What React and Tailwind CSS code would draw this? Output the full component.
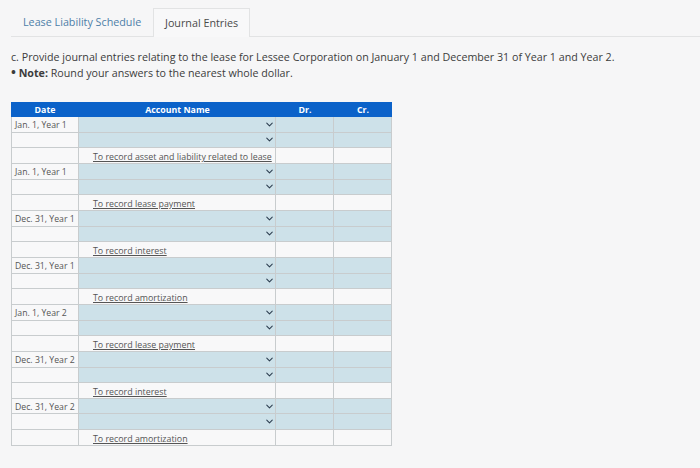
import React from 'react';
import { ChevronDown } from 'lucide-react';

const entries = [
    { date: "Jan. 1, Year 1", memo: "To record asset and liability related to lease" },
    { date: "Jan. 1, Year 1", memo: "To record lease payment" },
    { date: "Dec. 31, Year 1", memo: "To record interest" },
    { date: "Dec. 31, Year 1", memo: "To record amortization" },
    { date: "Jan. 1, Year 2", memo: "To record lease payment" },
    { date: "Dec. 31, Year 2", memo: "To record interest" },
    { date: "Dec. 31, Year 2", memo: "To record amortization" },
];

const rowClass = "grid grid-cols-[68px_197px_58px_58px] grid-rows-[15.67px] h-[15.67px]";
const cellClass = "border-r border-b border-[#c8ccce] min-w-0";

const InputRow = ({ date }) => (
    <div className={rowClass}>
        <div className={`${cellClass} border-l bg-[#f8f8f9] pl-[3px] text-[8.7px] leading-[17px] text-[#555] whitespace-nowrap`}>{date}</div>
        <div className={`${cellClass} bg-[#cde1e9] flex items-center justify-end`}>
            <ChevronDown className="w-[11px] h-[11px] text-[#2c3e50]" strokeWidth={2.3} />
        </div>
        <div className={`${cellClass} bg-[#cde1e9]`}></div>
        <div className={`${cellClass} bg-[#cde1e9]`}></div>
    </div>
);

const MemoRow = ({ memo }) => (
    <div className={rowClass}>
        <div className={`${cellClass} border-l bg-[#f8f8f9]`}></div>
        <div className={`${cellClass} bg-[#f8f8f9] pl-[14px] text-[8.85px] leading-[19px] text-[#555] underline whitespace-nowrap`}>{memo}</div>
        <div className={`${cellClass} bg-[#f8f8f9]`}></div>
        <div className={`${cellClass} bg-[#f8f8f9]`}></div>
    </div>
);

const App = () => {
    return (
        <div className="w-[700px] h-[468px] overflow-hidden bg-[#f6f6f7] font-['Open_Sans',sans-serif]">
            <div className="ml-[11px] pt-[8px] flex h-[37px] border-b border-[#e2e3e4]">
                <div className="w-[142px] pl-[12px] pt-[6px] text-[10.75px] leading-[16px] text-[#4d7ea8]">Lease Liability Schedule</div>
                <div className="w-[97px] h-[29px] bg-[#f8f8f9] border border-b-0 border-[#e2e3e4] pl-[11px] pt-[6px] text-[10.75px] leading-[16px] text-[#4a4a4a]">Journal Entries</div>
            </div>
            <div className="pl-[11px] pt-[12px] text-[10.7px] leading-[16px] text-[#3c3c3c]">
                <p>c. Provide journal entries relating to the lease for Lessee Corporation on January 1 and December 31 of Year 1 and Year 2.</p>
                <p><span className="font-bold"><span className="text-[13px] leading-[0]">•</span> Note:</span> Round your answers to the nearest whole dollar.</p>
            </div>
            <div className="ml-[11px] mt-[21px] w-[381px]">
                <div className="grid grid-cols-[68px_197px_58px_58px] h-[15px] bg-[#0b62c9] text-white text-[8.8px] font-bold leading-[16px] text-center">
                    <div>Date</div>
                    <div>Account Name</div>
                    <div>Dr.</div>
                    <div>Cr.</div>
                </div>
                {entries.map((entry, index) => (
                    <div key={index}>
                        <InputRow date={entry.date} />
                        <InputRow date="" />
                        <MemoRow memo={entry.memo} />
                    </div>
                ))}
            </div>
        </div>
    );
};

export default App;
